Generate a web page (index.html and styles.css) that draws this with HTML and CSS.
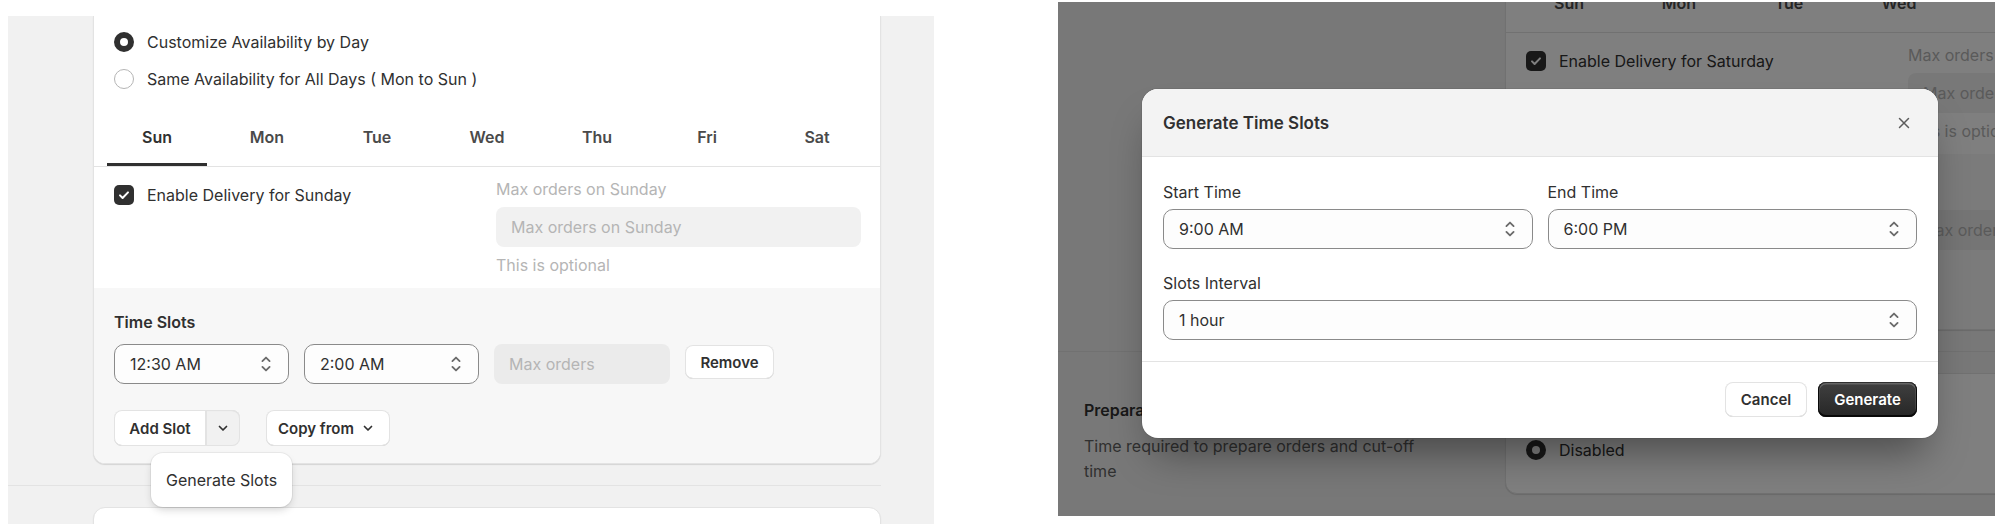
FILE: index.html
```html
<!DOCTYPE html>
<html lang="en">
<head>
  <meta charset="UTF-8">
  <title>Time Slots</title>
  <link rel="stylesheet" href="styles.css">
</head>
<body>
  <div class="shots">

    <!-- day availability with the add-slot menu open -->
    <section class="shot shot-left">
      <div class="layout">
        <div class="section">
          <div class="annot"></div>
          <div class="card card-cut">
            <div class="radio-list">
              <label class="radio-row"><span class="radio is-on"></span>Customize Availability by Day</label>
              <label class="radio-row"><span class="radio"></span>Same Availability for All Days ( Mon to Sun )</label>
            </div>
            <div class="tabs">
              <div class="tab is-active">Sun</div>
              <div class="tab">Mon</div>
              <div class="tab">Tue</div>
              <div class="tab">Wed</div>
              <div class="tab">Thu</div>
              <div class="tab">Fri</div>
              <div class="tab">Sat</div>
            </div>
            <div class="day-body">
              <div class="day-col">
                <label class="check-row">
                  <span class="checkbox"><svg viewBox="0 0 20 20"><path d="M6 10.4l2.6 2.6L14 7.4"/></svg></span>
                  Enable Delivery for Sunday
                </label>
              </div>
              <div class="day-col">
                <div class="field-label">Max orders on Sunday</div>
                <div class="input">Max orders on Sunday</div>
                <div class="help">This is optional</div>
              </div>
            </div>
            <div class="slots">
              <div class="slots-title">Time Slots</div>
              <div class="slot-row">
                <div class="select"><span>12:30 AM</span><svg class="sel-icon" viewBox="0 0 20 20"><path d="M7 7.6l3-3 3 3M7 12.4l3 3 3-3"/></svg></div>
                <div class="select"><span>2:00 AM</span><svg class="sel-icon" viewBox="0 0 20 20"><path d="M7 7.6l3-3 3 3M7 12.4l3 3 3-3"/></svg></div>
                <div class="input input-slot">Max orders</div>
                <button class="btn btn-remove">Remove</button>
              </div>
              <div class="slot-actions">
                <div class="btn-group">
                  <button class="btn btn-main">Add Slot</button>
                  <button class="btn btn-drop"><svg class="chev" viewBox="0 0 20 20"><path d="M6.5 8.5l3.5 3.5 3.5-3.5"/></svg></button>
                  <div class="popover">Generate Slots</div>
                </div>
                <button class="btn btn-copy">Copy from <svg class="chev" viewBox="0 0 20 20"><path d="M6.5 8.5l3.5 3.5 3.5-3.5"/></svg></button>
              </div>
            </div>
          </div>
        </div>
        <div class="section-divider"></div>
        <div class="section">
          <div class="annot"></div>
          <div class="card card-next"></div>
        </div>
      </div>
    </section>

    <!-- generate dialog over the saturday tab -->
    <section class="shot shot-right">
      <div class="layout">
        <div class="section">
          <div class="annot"></div>
          <div class="card card-cut">
            <div class="tabs">
              <div class="tab">Sun</div>
              <div class="tab">Mon</div>
              <div class="tab">Tue</div>
              <div class="tab">Wed</div>
              <div class="tab">Thu</div>
              <div class="tab">Fri</div>
              <div class="tab is-active">Sat</div>
            </div>
            <div class="day-body">
              <div class="day-col">
                <label class="check-row">
                  <span class="checkbox"><svg viewBox="0 0 20 20"><path d="M6 10.4l2.6 2.6L14 7.4"/></svg></span>
                  Enable Delivery for Saturday
                </label>
              </div>
              <div class="day-col">
                <div class="field-label">Max orders on Saturday</div>
                <div class="input">Max orders on Saturday</div>
                <div class="help">This is optional</div>
              </div>
            </div>
            <div class="slots">
              <div class="slots-title">Time Slots</div>
              <div class="slot-row">
                <div class="select"><span>9:00 AM</span><svg class="sel-icon" viewBox="0 0 20 20"><path d="M7 7.6l3-3 3 3M7 12.4l3 3 3-3"/></svg></div>
                <div class="select"><span>10:00 AM</span><svg class="sel-icon" viewBox="0 0 20 20"><path d="M7 7.6l3-3 3 3M7 12.4l3 3 3-3"/></svg></div>
                <div class="input input-slot">Max orders</div>
                <button class="btn btn-remove">Remove</button>
              </div>
              <div class="slot-actions">
                <div class="btn-group">
                  <button class="btn btn-main">Add Slot</button>
                  <button class="btn btn-drop"><svg class="chev" viewBox="0 0 20 20"><path d="M6.5 8.5l3.5 3.5 3.5-3.5"/></svg></button>
                </div>
                <button class="btn btn-copy">Copy from <svg class="chev" viewBox="0 0 20 20"><path d="M6.5 8.5l3.5 3.5 3.5-3.5"/></svg></button>
              </div>
            </div>
          </div>
        </div>
        <div class="section-divider"></div>
        <div class="section">
          <div class="annot">
            <div class="annot-title">Preparation Time</div>
            <p class="annot-text">Time required to prepare orders and cut-off time</p>
          </div>
          <div class="card card-next">
            <div class="radio-list radio-list-prep">
              <label class="radio-row"><span class="radio"></span>Enabled</label>
              <label class="radio-row"><span class="radio is-on"></span>Disabled</label>
            </div>
          </div>
        </div>
      </div>

      <div class="backdrop"></div>

      <div class="modal">
        <div class="modal-head">
          <h2 class="modal-title">Generate Time Slots</h2>
          <button class="modal-close"><svg viewBox="0 0 20 20"><path d="M5.5 5.5l9 9M14.5 5.5l-9 9"/></svg></button>
        </div>
        <div class="modal-body">
          <div class="form-row">
            <div class="form-field">
              <div class="form-label">Start Time</div>
              <div class="select"><span>9:00 AM</span><svg class="sel-icon" viewBox="0 0 20 20"><path d="M7 7.6l3-3 3 3M7 12.4l3 3 3-3"/></svg></div>
            </div>
            <div class="form-field">
              <div class="form-label">End Time</div>
              <div class="select"><span>6:00 PM</span><svg class="sel-icon" viewBox="0 0 20 20"><path d="M7 7.6l3-3 3 3M7 12.4l3 3 3-3"/></svg></div>
            </div>
          </div>
          <div class="form-field">
            <div class="form-label">Slots Interval</div>
            <div class="select"><span>1 hour</span><svg class="sel-icon" viewBox="0 0 20 20"><path d="M7 7.6l3-3 3 3M7 12.4l3 3 3-3"/></svg></div>
          </div>
        </div>
        <div class="modal-foot">
          <button class="btn btn-cancel">Cancel</button>
          <button class="btn btn-primary">Generate</button>
        </div>
      </div>
    </section>

  </div>
</body>
</html>
```

FILE: styles.css
```css
body {
  margin: 0;
  background: #fff;
  font-family: Inter, "Noto Sans", sans-serif;
  font-size: 16px;
  color: #303030;
}

* {
  box-sizing: border-box;
}

button {
  font-family: inherit;
}

.shots {
  display: flex;
  align-items: flex-start;
  gap: 124px;
  padding-left: 8px;
}

.shot {
  position: relative;
  flex: none;
  overflow: hidden;
  background: #f1f1f1;
}

.shot-left {
  width: 926px;
  height: 508px;
  margin-top: 16px;
}

.shot-right {
  width: 937px;
  height: 514px;
  margin-top: 2px;
}

/* page layout inside each shot */

.layout {
  display: flex;
  flex-direction: column;
}

.shot-left .layout {
  width: 873px;
}

.shot-right .layout {
  width: 1235px;
  margin-top: -28px;
}

.section {
  display: flex;
}

.annot {
  flex: none;
}

.shot-left .annot {
  width: 85px;
}

.shot-right .annot {
  width: 447px;
  padding: 25px 40px 0 26px;
}

.annot-title {
  font-weight: 600;
  line-height: 24px;
}

.annot-text {
  margin: 12px 0 0;
  line-height: 25px;
  color: #616161;
  width: 352px;
}

.section-divider {
  height: 1px;
  background: #e3e3e3;
  margin: 21px 0;
}

.card {
  flex: none;
  width: 788px;
  background: #fff;
  border: 1px solid #e3e3e3;
  border-radius: 12px;
  box-shadow: 0 1px 1px rgba(0, 0, 0, 0.12);
}

.card-cut {
  border-top: none;
  border-top-left-radius: 0;
  border-top-right-radius: 0;
}

.card-next {
  min-height: 120px;
}

/* radios and checkbox */

.radio-list {
  display: flex;
  flex-direction: column;
  gap: 13px;
  padding: 14px 20px 0;
}

.radio-list-prep {
  padding: 27px 20px 31px;
}

.radio-row {
  display: flex;
  align-items: center;
  gap: 13px;
  line-height: 24px;
}

.radio {
  width: 20px;
  height: 20px;
  border-radius: 50%;
  border: 1px solid #b5b5b5;
  background: #fff;
  flex: none;
}

.radio.is-on {
  border: 6px solid #303030;
}

.check-row {
  display: flex;
  align-items: center;
  gap: 13px;
  line-height: 24px;
  margin-top: 4px;
}

.checkbox {
  width: 20px;
  height: 20px;
  border-radius: 5px;
  background: #303030;
  flex: none;
  display: flex;
}

.checkbox svg {
  width: 20px;
  height: 20px;
  fill: none;
  stroke: #fff;
  stroke-width: 2;
  stroke-linecap: round;
  stroke-linejoin: round;
}

/* tabs */

.tabs {
  display: flex;
  gap: 10px;
  padding: 0 13px;
  margin-top: 17px;
  border-bottom: 1px solid #e3e3e3;
}

.shot-right .tabs {
  margin-top: 0;
}

.tab {
  flex: 1;
  height: 58px;
  padding-top: 3px;
  border-bottom: 3px solid transparent;
  display: flex;
  align-items: center;
  justify-content: center;
  font-weight: 600;
  color: #4a4a4a;
}

.tab.is-active {
  border-bottom-color: #303030;
  color: #303030;
}

/* day body */

.day-body {
  display: flex;
  gap: 17px;
  padding: 12px 19px 13px 20px;
}

.day-col {
  flex: 1;
}

.field-label {
  line-height: 20px;
  color: #b5b5b5;
  margin-bottom: 8px;
}

.input {
  height: 40px;
  border-radius: 8px;
  background: #f1f1f1;
  padding: 0 15px;
  display: flex;
  align-items: center;
  color: #b5b5b5;
}

.help {
  margin-top: 8px;
  line-height: 20px;
  color: #b5b5b5;
}

/* time slots */

.slots {
  position: relative;
  background: #f7f7f7;
  padding: 22px 20px 17px;
  border-radius: 0 0 11px 11px;
}

.slots-title {
  font-weight: 600;
  line-height: 24px;
}

.slot-row {
  display: flex;
  align-items: flex-start;
  gap: 15px;
  margin-top: 10px;
}

.select {
  height: 40px;
  border: 1px solid #8a8a8a;
  border-radius: 10px;
  background: #fdfdfd;
  display: flex;
  align-items: center;
  justify-content: space-between;
  padding: 0 10px 0 15px;
}

.slot-row .select {
  width: 175px;
}

.sel-icon {
  width: 24px;
  height: 24px;
  fill: none;
  stroke: #6b6b6b;
  stroke-width: 1.5;
  stroke-linecap: round;
  stroke-linejoin: round;
}

.input-slot {
  width: 176px;
  background: #ebebeb;
}

.btn {
  height: 34px;
  padding: 0 14px;
  border: none;
  border-radius: 8px;
  background: #fff;
  color: #303030;
  font-size: 15px;
  font-weight: 600;
  white-space: nowrap;
  display: inline-flex;
  align-items: center;
  gap: 4px;
  box-shadow: inset 0 0 0 1px #e3e3e3, inset 0 -1px 0 #c9c9c9;
}

.btn-remove {
  margin-top: 1px;
  width: 89px;
  justify-content: center;
}

.slot-actions {
  display: flex;
  gap: 26px;
  margin-top: 26px;
}

.btn-group {
  position: relative;
  display: flex;
}

.btn-group .btn,
.btn-copy {
  height: 36px;
}

.btn-main {
  width: 92px;
  justify-content: center;
  border-radius: 8px 0 0 8px;
}

.btn-drop {
  width: 34px;
  padding: 0;
  justify-content: center;
  border-radius: 0 8px 8px 0;
  background: #f1f1f1;
  box-shadow: inset 0 0 0 1px #e3e3e3, inset 0 1px 1px #dadada;
}

.btn-copy {
  padding: 0 12px;
  justify-content: center;
}

.chev {
  width: 20px;
  height: 20px;
  flex: none;
  fill: none;
  stroke: #303030;
  stroke-width: 1.7;
  stroke-linecap: round;
  stroke-linejoin: round;
}

.popover {
  position: absolute;
  top: calc(100% + 7px);
  left: 37px;
  height: 54px;
  padding: 0 15px;
  display: flex;
  align-items: center;
  white-space: nowrap;
  background: #fff;
  border-radius: 12px;
  box-shadow: 0 0 0 1px rgba(0, 0, 0, 0.05), 0 4px 8px -2px rgba(26, 26, 26, 0.22);
  z-index: 2;
}

/* dialog */

.backdrop {
  position: absolute;
  inset: 0;
  background: rgba(0, 0, 0, 0.5);
}

.modal {
  position: absolute;
  top: 87px;
  left: 84px;
  width: 796px;
  background: #fff;
  border-radius: 16px;
  overflow: hidden;
  box-shadow: 0 26px 40px -12px rgba(0, 0, 0, 0.4), 0 0 0 1px rgba(0, 0, 0, 0.06);
}

.modal-head {
  height: 68px;
  background: #f3f3f3;
  border-bottom: 1px solid #e3e3e3;
  display: flex;
  align-items: center;
  justify-content: space-between;
  padding: 0 20px 0 21px;
}

.modal-title {
  margin: 0;
  font-size: 17px;
  font-weight: 600;
}

.modal-close {
  width: 28px;
  height: 28px;
  padding: 4px;
  border: none;
  background: none;
  display: flex;
}

.modal-close svg {
  width: 20px;
  height: 20px;
  fill: none;
  stroke: #5c5c5c;
  stroke-width: 1.5;
  stroke-linecap: round;
}

.modal-body {
  display: flex;
  flex-direction: column;
  gap: 24px;
  padding: 25px 21px 21px;
  border-bottom: 1px solid #e3e3e3;
}

.form-row {
  display: flex;
  gap: 15px;
}

.form-row .form-field {
  flex: 1;
}

.form-label {
  line-height: 20px;
  margin-bottom: 7px;
}

.modal-foot {
  display: flex;
  justify-content: flex-end;
  gap: 11px;
  padding: 20px 21px 21px;
}

.btn-cancel {
  height: 35px;
  width: 82px;
  justify-content: center;
}

.btn-primary {
  height: 35px;
  width: 99px;
  justify-content: center;
  color: #fff;
  background: linear-gradient(#404040, #262626);
  box-shadow: inset 0 -1px 0 1px rgba(0, 0, 0, 0.8), inset 0 0 0 1px #303030, inset 0 1px 0 1.5px rgba(255, 255, 255, 0.2);
}
```
